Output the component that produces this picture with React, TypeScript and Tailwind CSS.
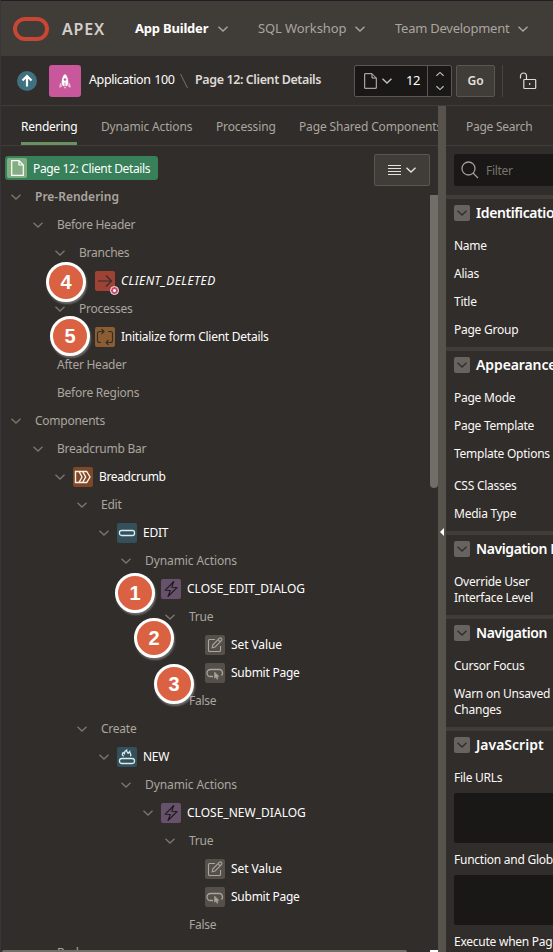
import React from "react";

type IconKind = "branch" | "process" | "crumb" | "button" | "hot" | "bolt" | "edit" | "submit";

type Node = {
  level: number;
  label: string;
  icon?: IconKind;
  open?: boolean;
  bold?: boolean;
  italic?: boolean;
  tracking?: string;
};

const indent = ["pl-[9px]", "pl-[31px]", "pl-[53px]", "pl-[75px]", "pl-[97px]", "pl-[119px]", "pl-[141px]", "pl-[163px]", "pl-[185px]"];

const nodes: Node[] = [
  { level: 0, label: "Pre-Rendering", open: true, bold: true, tracking: "tracking-[0px]" },
  { level: 1, label: "Before Header", open: true, tracking: "tracking-[-0.3px]" },
  { level: 2, label: "Branches", open: true },
  { level: 3, label: "CLIENT_DELETED", icon: "branch", italic: true, tracking: "tracking-[0.45px]" },
  { level: 2, label: "Processes", open: true },
  { level: 3, label: "Initialize form Client Details", icon: "process" },
  { level: 1, label: "After Header" },
  { level: 1, label: "Before Regions" },
  { level: 0, label: "Components", open: true },
  { level: 1, label: "Breadcrumb Bar", open: true },
  { level: 2, label: "Breadcrumb", icon: "crumb", open: true, tracking: "tracking-[-0.35px]" },
  { level: 3, label: "Edit", open: true },
  { level: 4, label: "EDIT", icon: "button", open: true },
  { level: 5, label: "Dynamic Actions", open: true, tracking: "tracking-[-0.1px]" },
  { level: 6, label: "CLOSE_EDIT_DIALOG", icon: "bolt", open: true, tracking: "tracking-[0.02px]" },
  { level: 7, label: "True", open: true },
  { level: 8, label: "Set Value", icon: "edit", tracking: "tracking-[-0.1px]" },
  { level: 8, label: "Submit Page", icon: "submit" },
  { level: 7, label: "False" },
  { level: 3, label: "Create", open: true },
  { level: 4, label: "NEW", icon: "hot", open: true },
  { level: 5, label: "Dynamic Actions", open: true, tracking: "tracking-[-0.1px]" },
  { level: 6, label: "CLOSE_NEW_DIALOG", icon: "bolt", open: true, tracking: "tracking-[0.02px]" },
  { level: 7, label: "True", open: true },
  { level: 8, label: "Set Value", icon: "edit", tracking: "tracking-[-0.1px]" },
  { level: 8, label: "Submit Page", icon: "submit" },
  { level: 7, label: "False" },
  { level: 1, label: "Body" },
];

function Chevron({ className = "" }: { className?: string }) {
  return (
    <svg viewBox="0 0 12 8" className={`h-2 w-3 shrink-0 ${className}`} fill="none" stroke="currentColor" strokeWidth="1.4">
      <path d="M1.5 1.800 6 6l4.500-4.200" />
    </svg>
  );
}

const iconBg: Record<IconKind, string> = {
  branch: "bg-[#9d4235] text-[#312d2a]",
  process: "bg-[#8b5d33] text-[#312d2a]",
  crumb: "bg-[#7e4828] text-[#fbf1e6]",
  button: "bg-[#35505a] text-[#d5eef3]",
  hot: "bg-[#35505a] text-[#d5eef3]",
  bolt: "bg-[#67516b] text-[#1f1b1c]",
  edit: "bg-[#55504a] text-[#aaa59f]",
  submit: "bg-[#55504a] text-[#aaa59f]",
};

function Glyph({ kind }: { kind: IconKind }) {
  switch (kind) {
    case "branch":
      return <path d="M3 10h13.500M11 4.500l5.500 5.500-5.500 5.500" />;
    case "process":
      return <path d="M6 15.500H4.500a2 2 0 0 1-2-2v-7a2 2 0 0 1 2-2H9M6.500 2 9 4.500 6.500 7M13 4.500h2.500a2 2 0 0 1 2 2v7a2 2 0 0 1-2 2H11M13.500 13 11 15.500l2.500 2.500" />;
    case "crumb":
      return <path strokeWidth="1.400" d="M2.500 4.500h3.500l3 5.500-3 5.500h-3.500zM6 4.500h3.500l3.200 5.500-3.200 5.500H6M10 4.500h3.700l3.300 5.500-3.300 5.500H10" />;
    case "button":
      return <rect x="2.500" y="7.500" width="15" height="5" rx="2" strokeWidth="1.300" />;
    case "hot":
      return (
        <>
          <rect x="2.500" y="11.500" width="15" height="5" rx="2.300" strokeWidth="1.300" />
          <path strokeWidth="1.300" d="M6.800 9.300C4.500 8 5.300 6.300 6.200 5.600l1.200 1c0-2 1-3 2.200-3.500-.2 1.500.6 2 1.500 3.200l1.500-1.500c-.1 1.100 2.500 2.700.8 4.500" />
        </>
      );
    case "bolt":
      return <path d="M12.800 2.500 4 11.300l5.300.2L7 17.500l9-9-5.300-.2z" strokeLinejoin="round" />;
    case "edit":
      return <path d="M10 4.500H4.500a1 1 0 0 0-1 1v10a1 1 0 0 0 1 1h10a1 1 0 0 0 1-1V11M7.200 12.800l.7-3 6.600-6.600q1-.8 2 .1t.1 2.100l-6.500 6.600zM13 4.600l2.300 2.300" />;
    case "submit":
      return (
        <>
          <path d="M8 13.500H5.500a3.500 3.500 0 0 1 0-7h9a3.500 3.500 0 0 1 2 6" strokeWidth="1.300" />
          <path d="M9.500 9v6.300l1.500-1.300 1 2.300 1-.5-1-2.200 2-.1z" fill="currentColor" strokeWidth=".5" />
        </>
      );
  }
}

function TypeIcon({ kind }: { kind: IconKind }) {
  return (
    <span className={`relative mr-1.5 h-5 w-5 shrink-0 rounded-[2px] ${iconBg[kind]}`}>
      <svg viewBox="0 0 20 20" className="h-5 w-5" fill="none" stroke="currentColor" strokeWidth="1.100">
        <Glyph kind={kind} />
      </svg>
      {kind === "branch" && (
        <span className="absolute -right-1 -bottom-1 h-[9px] w-[9px] rounded-full border border-[#f4e7ea] bg-[#c9496b]">
          <span className="absolute left-[2px] top-[2px] h-[3px] w-[3px] rounded-full bg-white" />
        </span>
      )}
    </span>
  );
}

function TreeRow({ node }: { node: Node }) {
  return (
    <div className={`flex h-7 shrink-0 items-center whitespace-nowrap ${indent[node.level]}`}>
      <span className={`flex w-3 shrink-0 text-[#7b756f] ${node.icon ? "mr-[7px]" : "mr-[13px]"}`}>
        {node.open && <Chevron />}
      </span>
      {node.icon && <TypeIcon kind={node.icon} />}
      <span
        className={`${node.icon ? "text-white" : "text-[#aba59f]"} ${node.bold ? "font-semibold" : ""} ${node.italic ? "italic" : ""} ${node.tracking ?? "tracking-[-0.25px]"}`}
      >
        {node.label}
      </span>
    </div>
  );
}

function Section({ title, tracking = "tracking-[-0.1px]", children }: { title: string; tracking?: string; children: React.ReactNode }) {
  return (
    <section className="shrink-0 border-t-4 border-[#403c38] pl-2">
      <h2 className={`flex h-7 items-center gap-1.5 whitespace-nowrap text-[14px] font-semibold text-white ${tracking}`}>
        <span className="flex h-4 w-4 shrink-0 items-center justify-center rounded-[2px] bg-[#68635e] text-[#312d2a]">
          <Chevron />
        </span>
        <span className="-mt-px">{title}</span>
      </h2>
      <div className="py-1">{children}</div>
    </section>
  );
}

function Label({ children }: { children: React.ReactNode }) {
  return <div className="whitespace-nowrap pb-[5px] pt-[7px] leading-4 tracking-[-0.25px] text-[#fbf9f8]">{children}</div>;
}

function Badge({ n, place }: { n: number; place: string }) {
  return (
    <div
      className={`absolute flex h-10 w-10 items-center justify-center rounded-full border-[3px] border-white bg-[#da6243] pb-px font-['Liberation_Sans',Arial,sans-serif] text-[20px] font-bold leading-none text-white shadow-[1px_2px_2px_rgba(190,190,190,0.45)] ${place}`}
    >
      {n}
    </div>
  );
}

export default function App() {
  return (
    <div className="relative flex h-[952px] w-[553px] flex-col overflow-hidden border-l border-[#35373a] bg-[#312d2a] font-['Noto_Sans','Open_Sans',sans-serif] text-[12px] text-[#aba59f]">
      <header className="flex h-14 shrink-0 items-center whitespace-nowrap border-t border-[#201d25] bg-[#403c38] pl-3 text-[13px]">
        <span className="h-6 w-9 shrink-0 rounded-full border-[4px] border-[#c74634]" />
        <span className="ml-[13px] w-[73px] text-[16px] font-semibold tracking-[0.8px] text-[#d3cec9]">APEX</span>
        <span className="w-[82px] font-bold tracking-[-0.2px] text-white">App Builder</span>
        <Chevron className="mr-[29px]" />
        <span className="w-[96px] tracking-[-0.1px]">SQL Workshop</span>
        <Chevron className="mr-[29px]" />
        <span className="w-[122px] tracking-[-0.25px]">Team Development</span>
        <Chevron />
      </header>

      <div className="flex h-[50px] shrink-0 items-center whitespace-nowrap border-b border-[#403c38] pl-4">
        <span className="flex h-5 w-5 shrink-0 items-center justify-center rounded-full bg-[#3f7180]">
          <svg viewBox="0 0 20 20" className="h-5 w-5" fill="none" stroke="#fff" strokeWidth="2.200">
            <path d="M10 15.500V5.500M5.500 9.500 10 5l4.500 4.500" />
          </svg>
        </span>
        <span className="ml-3 h-8 w-8 shrink-0 rounded-[3px] bg-[#c9579c]">
          <svg viewBox="0 0 32 32" className="h-8 w-8" fill="#fff">
            <path d="M16 9c2.300 2 3.200 4.500 3.200 7.500 0 2-.5 3.500-1.200 4.500h-4c-.7-1-1.200-2.500-1.200-4.500C12.800 13.500 13.700 11 16 9z" />
            <path d="M12.200 17 10.500 20v3l2.500-1.500zM19.800 17l1.700 3v3L19 21.500zM14.500 21.500h3L16 24z" opacity=".6" />
            <circle cx="16" cy="14.500" r="1.300" fill="#c9579c" />
            <path d="M15.600 17.500h.8V22h-.8z" fill="#c9579c" />
          </svg>
        </span>
        <span className="ml-2 w-[91px] text-[12.5px] tracking-[-0.4px] text-white [word-spacing:1px]">Application 100</span>
        <svg viewBox="0 0 8 16" className="h-4 w-2 shrink-0" stroke="#78716b" strokeWidth="1">
          <path d="M.5 1 7.500 15" />
        </svg>
        <span className="ml-[7px] w-[159px] text-[12.5px] font-semibold tracking-[-0.4px] text-[#dedad6]">Page 12: Client Details</span>
        <div className="flex h-8 w-[98px] shrink-0 overflow-hidden rounded-[2px] border border-[#5b5650] bg-[#191817] text-[#c5c0bb]">
          <div className="flex w-[73px] items-center border-r border-[#5b5650] pl-[9px]">
            <svg viewBox="0 0 13 16" className="h-4 w-[13px]" fill="none" stroke="currentColor" strokeWidth="1">
              <path d="M.7.700h7.300l4.300 4.300v10.300H.7zM8 .7V5h4.300" />
            </svg>
            <Chevron className="ml-1" />
            <span className="ml-[13px] text-[13px] tracking-[-0.5px] text-white">12</span>
          </div>
          <div className="flex flex-1 flex-col items-center justify-between py-1">
            <Chevron className="scale-y-[-0.8] scale-x-[0.8]" />
            <Chevron className="scale-[0.8]" />
          </div>
        </div>
        <button className="ml-1 h-8 w-[39px] shrink-0 rounded-[2px] border border-[#5b5650] bg-[#403c38] font-semibold text-[#e5e1dd]">Go</button>
        <span className="ml-[7px] h-8 w-px shrink-0 bg-[#484440]" />
        <svg viewBox="0 0 18 18" className="ml-4 h-[18px] w-[18px] shrink-0" fill="none" stroke="#dedad6" strokeWidth="1.200">
          <path d="M1.500 6.500V4a3 3 0 0 1 6 0v3M5.500 7.500h10.500a.7.700 0 0 1 .7.700v7.600a.7.700 0 0 1-.7.700H5.500a.7.700 0 0 1-.7-.7V8.200a.7.700 0 0 1 .7-.7z" />
          <path d="M10.700 11v2" />
        </svg>
      </div>

      <main className="flex min-h-0 flex-1">
        <section className="flex w-[437px] shrink-0 flex-col overflow-hidden">
          <nav className="flex h-10 shrink-0 items-stretch overflow-hidden whitespace-nowrap border-b border-[#403c38] pl-5 leading-[42px] tracking-[-0.15px]">
            <span className="mr-6 w-14 shrink-0 border-b-[3px] border-[#6b9163] tracking-[-0.25px] text-white">Rendering</span>
            <span className="w-[115px] shrink-0">Dynamic Actions</span>
            <span className="w-[83px] shrink-0">Processing</span>
            <span className="shrink-0">Page Shared Components</span>
          </nav>
          <div className="flex min-h-0 flex-1 flex-col overflow-hidden">
            <div className="flex h-[37px] shrink-0 justify-between pl-1 pr-2 pt-2">
              <div className="mt-0.5 flex h-6 w-[153px] items-center rounded-[3px] bg-[#37805a] pl-0.5 text-white">
                <span className="flex h-5 w-5 items-center justify-center rounded-[2px] bg-[#82ae82]">
                  <svg viewBox="0 0 13 16" className="h-4 w-[13px]" fill="none" stroke="currentColor" strokeWidth="1.200">
                    <path d="M.7.700h7.300l4.300 4.300v10.300H.7zM8 .7V5h4.300" />
                  </svg>
                </span>
                <span className="ml-1.5 mt-0.5 whitespace-nowrap tracking-[-0.35px]">Page 12: Client Details</span>
              </div>
              <div className="flex h-8 w-14 items-center justify-center gap-1 rounded-[2px] border border-[#5b5650] bg-[#403c38] text-[#e5e1dd]">
                <svg viewBox="0 0 13 12" className="h-3 w-[13px]" stroke="currentColor" strokeWidth="1">
                  <path d="M0 1.500h13M0 4.500h13M0 7.500h13M0 10.500h13" />
                </svg>
                <Chevron />
              </div>
            </div>
            <div className="flex min-h-0 flex-1 justify-between">
              <div className="flex min-h-0 flex-col overflow-hidden">
                {nodes.map((node, i) => (
                  <TreeRow key={i} node={node} />
                ))}
              </div>
              <div className="mt-3 h-[293px] w-2 rounded-b bg-[#716d69]" />
            </div>
            <div className="flex h-0.5 shrink-0 justify-between">
              <span className="ml-px w-[405px] rounded-t bg-[#716d69]" />
              <span className="w-2 bg-white" />
            </div>
          </div>
        </section>
        <div className="flex w-2 shrink-0 justify-center bg-[#57524c] pt-[422px]">
          <span className="h-0 w-0 border-y-4 border-r-4 border-y-transparent border-r-white" />
        </div>
        <aside className="flex flex-1 flex-col overflow-hidden">
          <div className="h-10 shrink-0 whitespace-nowrap border-b border-[#403c38] pl-5 leading-[42px] tracking-[-0.25px]">Page Search</div>
          <div className="mb-[9px] ml-2 mt-2 flex h-8 shrink-0 items-center rounded-l-[2px] bg-[#191817] pl-[7px] text-[#78736e]">
            <svg viewBox="0 0 18 18" className="h-[18px] w-[18px]" fill="none" stroke="#a29c96" strokeWidth="1.300">
              <circle cx="7.500" cy="7.500" r="6.500" />
              <path d="m12 12 5 5" />
            </svg>
            <span className="ml-[7px] mt-0.5 tracking-[-0.3px]">Filter</span>
          </div>
          <Section title="Identification" tracking="tracking-[-0.4px]">
            <Label>Name</Label>
            <Label>Alias</Label>
            <Label>Title</Label>
            <Label>Page Group</Label>
          </Section>
          <Section title="Appearance">
            <Label>Page Mode</Label>
            <Label>Page Template</Label>
            <div className="mb-1">
              <Label>Template Options</Label>
            </div>
            <Label>CSS Classes</Label>
            <Label>Media Type</Label>
          </Section>
          <Section title="Navigation Menu" tracking="tracking-[-0.4px]">
            <Label>Override User<br />Interface Level</Label>
          </Section>
          <Section title="Navigation" tracking="tracking-[-0.4px]">
            <Label>Cursor Focus</Label>
            <Label>Warn on Unsaved<br />Changes</Label>
          </Section>
          <Section title="JavaScript" tracking="tracking-[0px]">
            <Label>File URLs</Label>
            <div className="my-0.5 h-[50px] rounded-l-[2px] bg-[#191817]" />
            <Label>Function and Global Variable Declaration</Label>
            <div className="my-0.5 h-[50px] rounded-l-[2px] bg-[#191817]" />
            <Label>Execute when Page Loads</Label>
          </Section>
        </aside>
      </main>

      <Badge n={4} place="left-[45px] top-[262px]" />
      <Badge n={5} place="left-[49px] top-[316px]" />
      <Badge n={1} place="left-[114px] top-[573px]" />
      <Badge n={2} place="left-[133px] top-[618px]" />
      <Badge n={3} place="left-[153px] top-[664px]" />
    </div>
  );
}
